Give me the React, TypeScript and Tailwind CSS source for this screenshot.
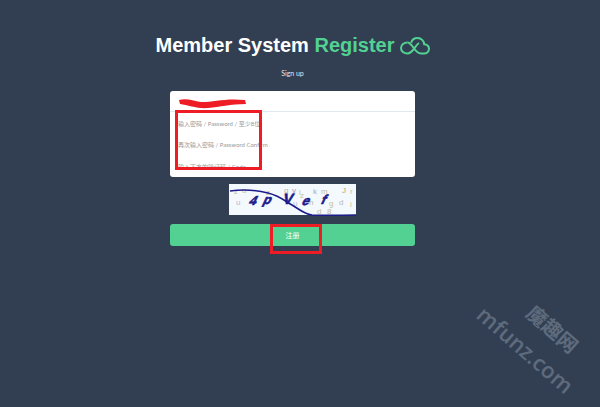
import React from "react";

const sans = "font-['Liberation_Sans',Arial,sans-serif]";
const cjk = "font-['Lato','Noto_Sans_CJK_SC',sans-serif]";

const CloudIcon = () => (
  <svg width="30" height="18" viewBox="0 0 30 18" fill="none" stroke="#53d192" strokeWidth="2" className="ml-[5px] mt-[1px]">
    <path d="M7.500 5.500C4 5.500 1 7.800 1 11s3 5.500 6.500 5.500c5.500 0 7.500-8 11.500-10.500" />
    <path d="M7.500 5.500c5 0 7 11 13.500 11h3c2.800 0 5-2 5-4.700 0-2.600-2.200-4.600-4.800-4.600-.2-3.300-3-6.200-6.600-6.200-3.200 0-5.700 2-6.400 4.700" />
  </svg>
);

const Captcha = () => (
  <svg width="127" height="32" viewBox="0 0 127 32" className="block">
    <rect width="127" height="31" fill="#f4f9fd" />
    <g fontFamily="Liberation Sans, sans-serif" fontSize="8" fill="#c4c09c">
      <text x="5" y="10">z</text>
      <text x="13" y="9">u</text>
      <text x="7" y="21" fill="#b8b8cf">u</text>
      <text x="37" y="11">z</text>
      <text x="55" y="9" fill="#b5b5ac">q</text>
      <text x="63" y="9" fill="#a09ac0">y</text>
      <text x="70" y="11">i</text>
      <text x="84" y="10" fill="#a9a9bd">k</text>
      <text x="92" y="10">m</text>
      <text x="113" y="9" fill="#b0a880">J</text>
      <text x="121" y="10" fill="#bcbcbc">r</text>
      <text x="64" y="22" fill="#bcbcd2">u</text>
      <text x="71" y="14">z</text>
      <text x="80" y="21" fill="#bdb69f">n</text>
      <text x="100" y="22">g</text>
      <text x="110" y="21" fill="#b8b8c6">d</text>
      <text x="121" y="23">i</text>
      <text x="88" y="30">d</text>
      <text x="98" y="30" fill="#bdb69f">8</text>
    </g>
    <g fontFamily="Liberation Sans, sans-serif" fontSize="13" fontWeight="700" fill="#1c1c8c" stroke="#1c1c8c" strokeWidth="0.6">
      <text transform="translate(19 21) skewX(-25)">4</text>
      <text transform="translate(33 20) skewX(-25)">p</text>
      <text transform="translate(53 20) skewX(-15)" fontSize="15">V</text>
      <text transform="translate(72 21) skewX(-25)">e</text>
      <text transform="translate(91 20) skewX(-25)">f</text>
    </g>
    <path d="M1 7c14-2 26-1 38 2s17 8 24 12 12 9 20 10c10 1 25 0 44 0" fill="none" stroke="#1c1c8c" strokeWidth="1.600" />
  </svg>
);

const Field = ({ text, className }: { text: string; className: string }) => (
  <div className={`flex items-center pl-2 text-[6px] text-[#999999] ${className}`}>{text}</div>
);

export default function App() {
  return (
    <div className={`relative h-[407px] w-[600px] overflow-hidden bg-[#323f53] ${cjk}`}>
      <div className="flex flex-col items-center pt-[30px] pr-[15px]">
        <div className="flex items-center">
          <h1 className={`text-[20px] leading-[30px] font-bold whitespace-nowrap text-white ${sans}`}>
            Member System <span className="text-[#53d192]">Register</span>
          </h1>
          <CloudIcon />
        </div>
        <p className="mt-2 text-[7px] leading-[10px] text-[#e3e6ea]">Sign up</p>

        <div className="mt-[13px] w-[245px] overflow-hidden rounded-[3px] bg-white">
          <Field text="" className="h-[21px] border-b border-[#dfeaf0]" />
          <Field text="输入密码 / Password / 至少8位" className="h-[22px]" />
          <Field text="再次输入密码 / Password Confirm" className="h-[21px]" />
          <Field text="输入下方的验证码 / Code" className="h-[22px]" />
        </div>

        <div className="mt-[7px]">
          <Captcha />
        </div>

        <button className="mt-2 h-[22px] w-[245px] rounded-[3px] bg-[#53d192] text-[7px] text-white">注册</button>
      </div>

      {/* red marks drawn over the screenshot */}
      <svg width="70" height="12" viewBox="0 0 70 12" className="absolute left-[178px] top-[97px]">
        <path d="M1 3c8-2 14 1 22 2 14 0 24-4 44-2l1 4c-16 0-26 3-38 4-10 1-20-3-28-4z" fill="#ee1c25" />
      </svg>
      <div className="absolute left-[175px] top-[110px] h-[60px] w-[87px] border-[3px] border-[#ee1c25]" />
      <div className="absolute left-[270px] top-[224px] h-[30px] w-[52px] border-[3px] border-[#ee1c25]" />

      {/* watermark */}
      <div className="absolute left-[474px] top-[310px] w-[124px] rotate-[41deg] text-center whitespace-nowrap text-[#5d6b7d]">
        <div className="translate-x-[7px] text-[20px] leading-[20px] font-bold font-['Noto_Sans_CJK_SC',sans-serif]">魔趣网</div>
        <div className="mt-[11px] text-[22px] leading-[24px] font-semibold font-['Open_Sans',sans-serif]">mfunz.com</div>
      </div>
    </div>
  );
}
